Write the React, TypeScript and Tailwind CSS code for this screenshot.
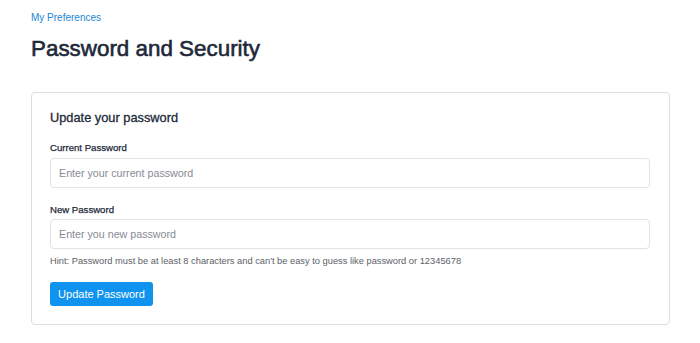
const font = "font-['Liberation_Sans',Helvetica,Arial,sans-serif]";

function Field({ label, placeholder, first }: { label: string; placeholder: string; first?: boolean }) {
  return (
    <div>
      <label
        className={`${first ? 'mt-[14px]' : 'mt-[15px]'} block text-[9.6px] leading-[14px] font-normal text-[#1d2939] [-webkit-text-stroke:0.25px_#1d2939]`}
      >
        {label}
      </label>
      <input
        type="password"
        placeholder={placeholder}
        className={`${first ? 'mt-[3px]' : 'mt-[2px]'} block h-[30px] w-[600px] rounded-[4px] border border-[#e0e2e6] bg-white px-[8px] text-[10.7px] outline-none placeholder:text-[#868b93]`}
      />
    </div>
  );
}

export default function App() {
  return (
    <div className={`min-h-screen bg-white px-[31px] pt-[11px] ${font} text-[#1d2939]`}>
      <a href="#" className="block text-[10px] leading-[14px] text-[#1b86d6]">
        My Preferences
      </a>
      <h1 className="mt-[10px] text-[22.4px] leading-[28px] font-normal text-[#1d2939] [-webkit-text-stroke:0.6px_#1d2939]">
        Password and Security
      </h1>

      <div className="mt-[29px] w-[639px] rounded-[4px] border border-[#dcdee2] px-[18px] pt-[16px] pb-[18px]">
        <h2 className="text-[12.8px] leading-[18px] font-normal text-[#1d2939] [-webkit-text-stroke:0.3px_#1d2939]">
          Update your password
        </h2>

        <Field first label="Current Password" placeholder="Enter your current password" />
        <Field label="New Password" placeholder="Enter you new password" />

        <p className="mt-[5px] text-[9.3px] leading-[14px] text-[#5c6066]">
          Hint: Password must be at least 8 characters and can't be easy to guess like password or 12345678
        </p>

        <button className="mt-[14px] block h-[24px] w-[103px] rounded-[3px] bg-[#1093ee] text-[11px] text-white">
          Update Password
        </button>
      </div>
    </div>
  );
}
